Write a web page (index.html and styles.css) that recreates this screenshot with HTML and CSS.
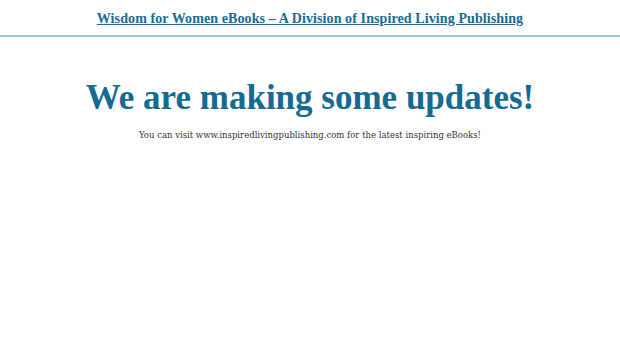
FILE: index.html
```html
<!DOCTYPE html>
<html lang="en">
<head>
  <meta charset="UTF-8">
  <title>Wisdom for Women eBooks</title>
  <link rel="stylesheet" href="styles.css">
</head>
<body>
  <header class="site-header">
    <a href="#" class="site-title">Wisdom for Women eBooks &ndash; A Division of Inspired Living Publishing</a>
  </header>
  <main class="notice">
    <h1>We are making some updates!</h1>
    <p>You can visit www.inspiredlivingpublishing.com for the latest inspiring eBooks!</p>
  </main>
</body>
</html>
```

FILE: styles.css
```css
body {
  margin: 0;
  background: #fff;
  font-family: "Liberation Serif", Georgia, serif;
  color: #333;
}
.site-header {
  text-align: center;
  padding: 9px 0 8px;
  border-bottom: 2px solid #9cc6da;
  line-height: 17px;
}
.site-title {
  color: #1a6a94;
  font-weight: bold;
  font-size: 14px;
  letter-spacing: 0.1px;
  text-decoration: underline;
}
.notice {
  text-align: center;
}
.notice h1 {
  color: #156a94;
  font-size: 35px;
  line-height: 40px;
  font-weight: bold;
  margin: 41px 0 12px;
}
.notice p {
  font-family: "DejaVu Serif", serif;
  font-size: 8.5px;
  margin: 0;
  color: #333;
}
```
